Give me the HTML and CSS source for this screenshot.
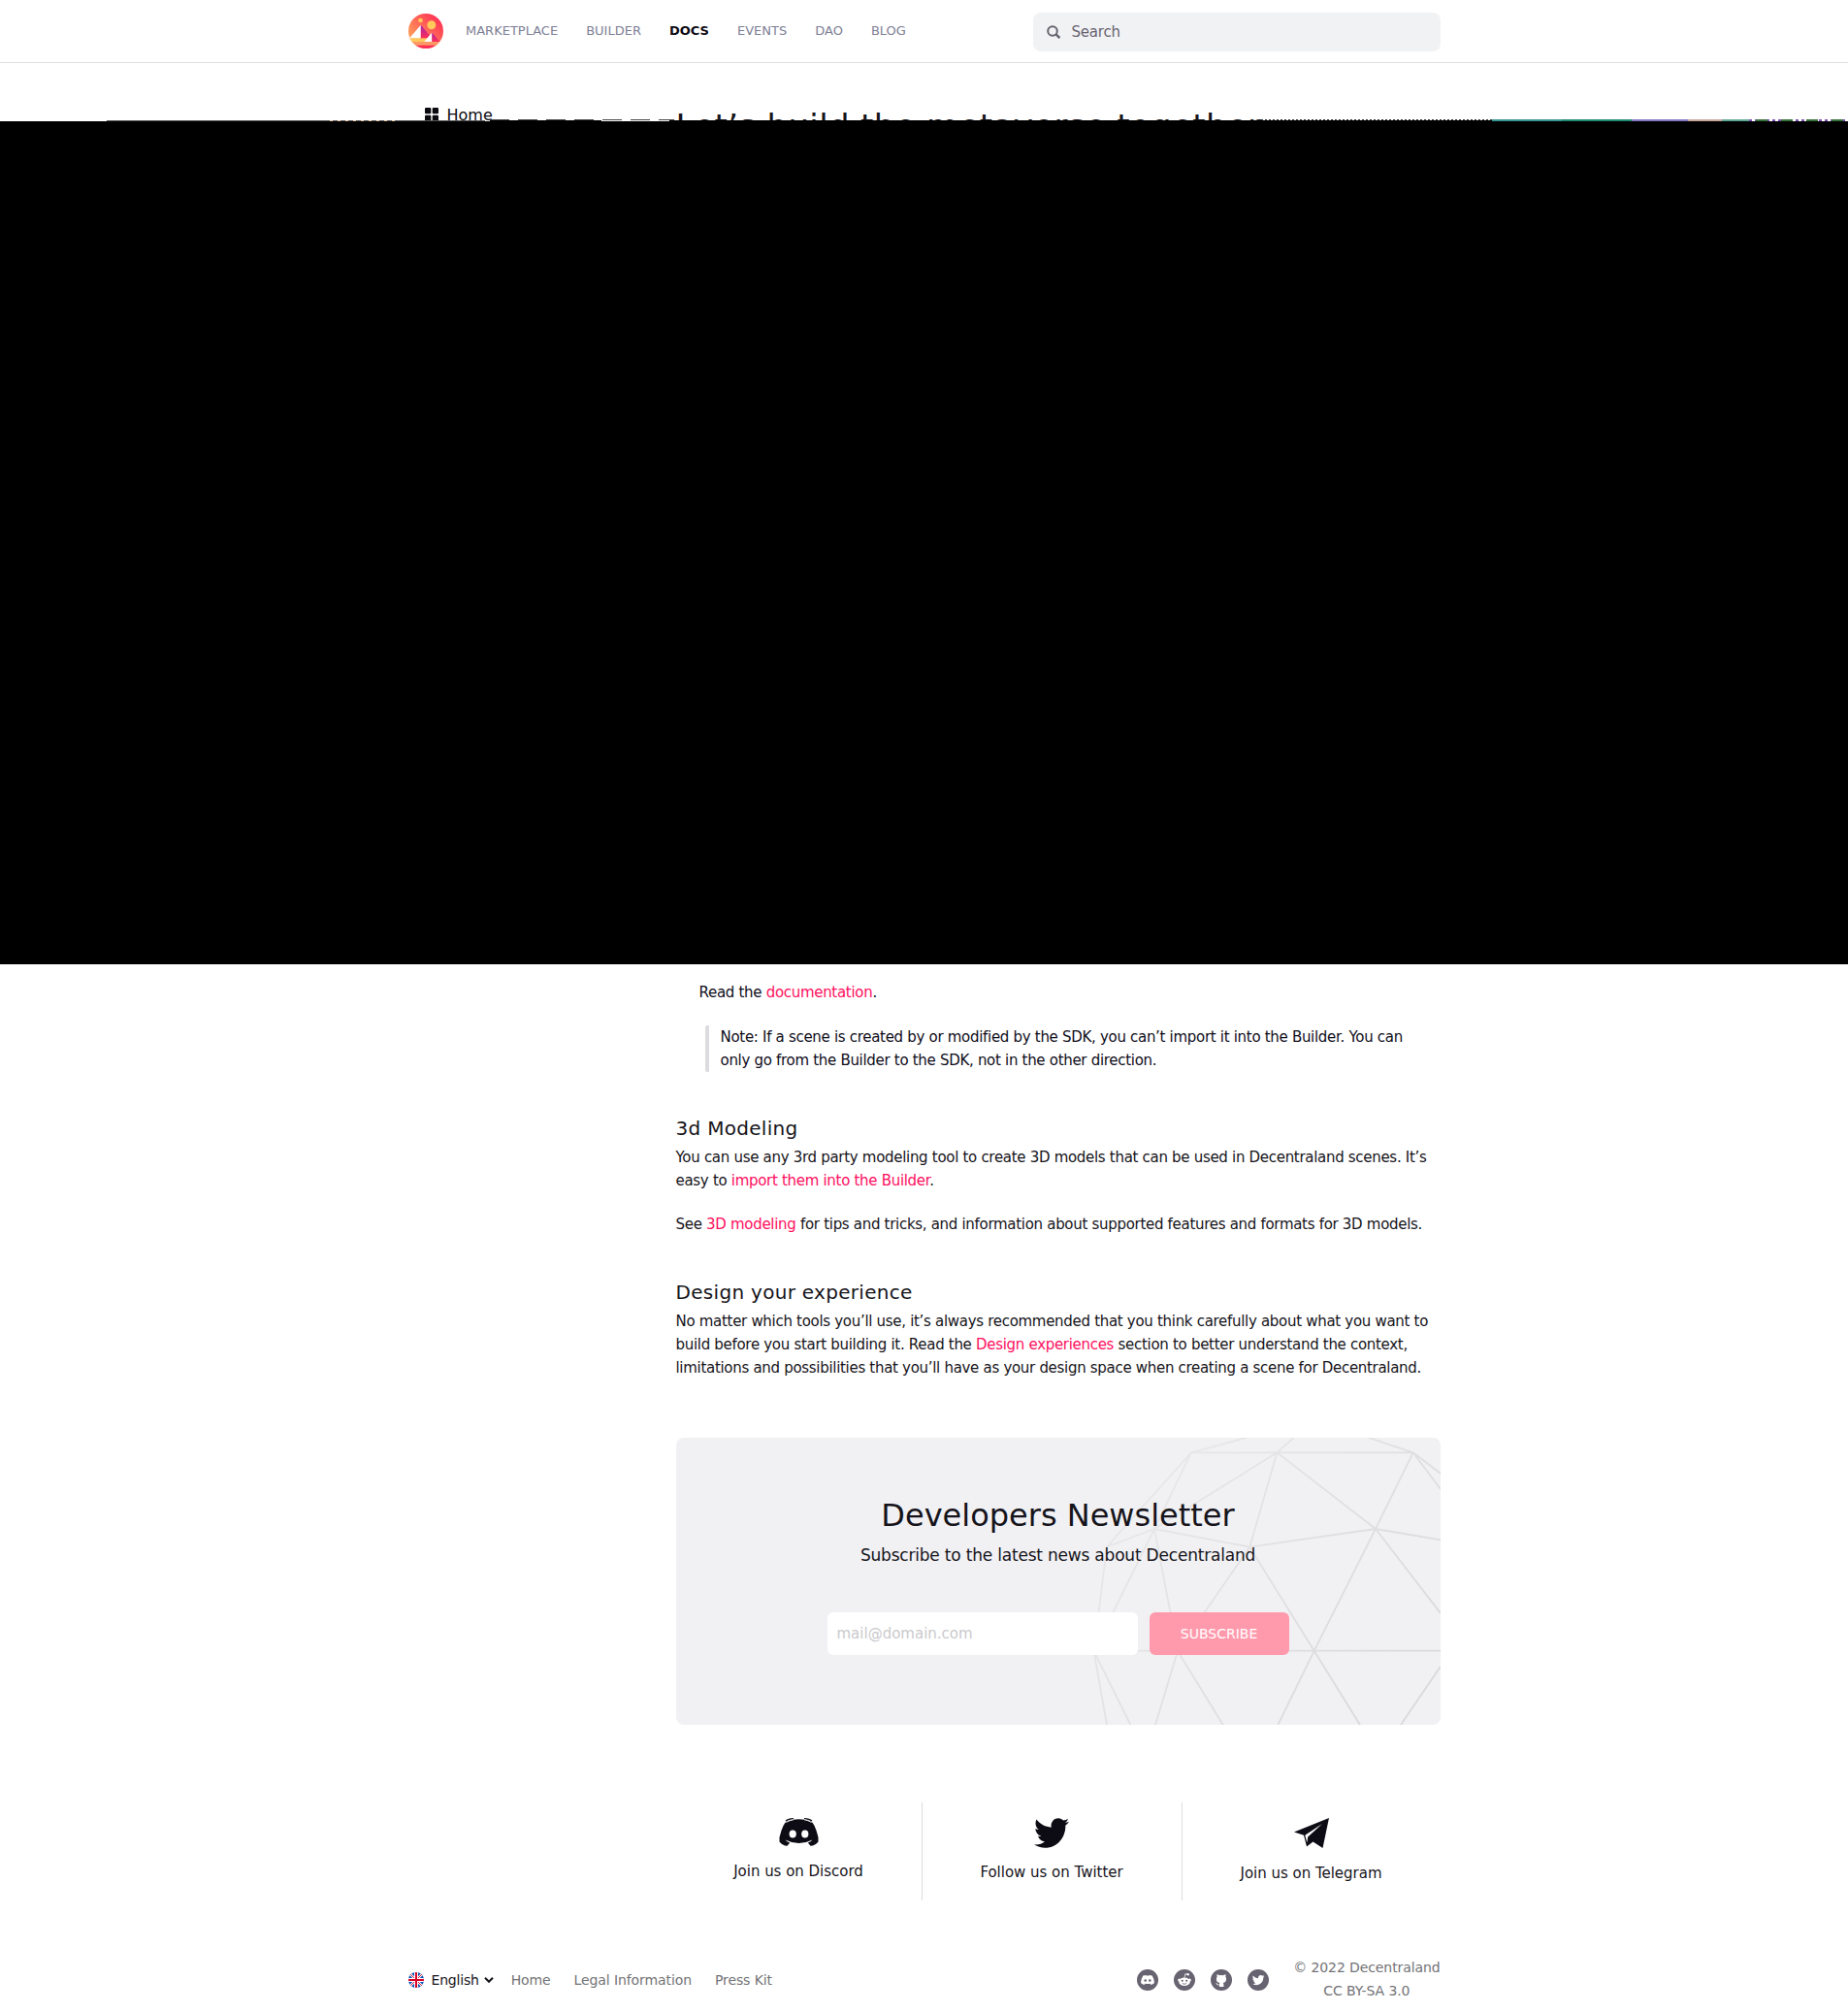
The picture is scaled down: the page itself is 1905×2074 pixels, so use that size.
FILE: index.html
```html
<!DOCTYPE html>
<html lang="en">
<head>
<meta charset="utf-8">
<title>Decentraland Documentation</title>
<link rel="stylesheet" href="styles.css">
</head>
<body>
<svg class="defs" width="0" height="0">
  <defs>
    <symbol id="twitter" viewBox="0 0 512 512"><path d="M459.37 151.716c.325 4.548.325 9.097.325 13.645 0 138.72-105.583 298.558-298.558 298.558-59.452 0-114.68-17.219-161.137-47.106 8.447.974 16.568 1.299 25.34 1.299 49.055 0 94.213-16.568 130.274-44.832-46.132-.975-84.792-31.188-98.112-72.772 6.498.974 12.995 1.624 19.818 1.624 9.421 0 18.843-1.3 27.614-3.573-48.081-9.747-84.143-51.98-84.143-102.985v-1.299c13.969 7.797 30.214 12.67 47.431 13.319-28.264-18.843-46.781-51.005-46.781-87.391 0-19.492 5.197-37.36 14.294-52.954 51.655 63.675 129.3 105.258 216.365 109.807-1.624-7.797-2.599-15.918-2.599-24.04 0-57.828 46.782-104.934 104.934-104.934 30.213 0 57.502 12.67 76.67 33.137 23.715-4.548 46.456-13.32 66.599-25.34-7.798 24.366-24.366 44.833-46.132 57.827 21.117-2.273 41.584-8.122 60.426-16.243-14.292 20.791-32.161 39.308-52.628 54.253z"/></symbol>
  </defs>
</svg>

<header class="navbar">
  <div class="navbar-inner">
    <svg class="logo" viewBox="0 0 36 36">
      <defs>
        <linearGradient id="sky" x1="1" y1="0" x2="0" y2="1"><stop offset="0.1" stop-color="#ff2d55"/><stop offset="1" stop-color="#ffbc5b"/></linearGradient>
        <linearGradient id="peak" x1="0" y1="0" x2="0" y2="1"><stop offset="0" stop-color="#a524b3"/><stop offset="1" stop-color="#ff2d55"/></linearGradient>
        <clipPath id="disc"><circle cx="18" cy="18" r="18"/></clipPath>
      </defs>
      <g clip-path="url(#disc)">
        <path fill="url(#sky)" d="M0 0h36v36H0z"/>
        <path fill="#ffc95b" d="M0 25.2h24V29H0z"/>
        <path fill="#fc9965" d="M3 29h31v4H3z"/>
        <path fill="#ff2d55" d="M5 32.8h27V36H5z"/>
        <circle cx="12.5" cy="7" r="2.3" fill="#ffc95b"/>
        <circle cx="23.8" cy="11.8" r="4.5" fill="#ffc95b"/>
        <path fill="#fff" d="M12.8 11.7v13.5H1.2z"/>
        <path fill="url(#peak)" d="M12.8 11.7v13.5h11.5z"/>
        <path fill="#fff" d="M24.3 19.4V29h-8.1z"/>
        <path fill="url(#peak)" d="M24.3 19.4V29h8.2z"/>
      </g>
    </svg>
    <nav class="menu">
      <a>MARKETPLACE</a><a>BUILDER</a><a class="active">DOCS</a><a>EVENTS</a><a>DAO</a><a>BLOG</a>
    </nav>
    <div class="search">
      <svg width="14" height="14" viewBox="0 0 14 14" fill="none" stroke="#676370" stroke-width="2"><circle cx="6" cy="6" r="4.8"/><path d="M9.4 9.2l4 4" stroke-width="2.4"/></svg>
      <span>Search</span>
    </div>
  </div>
</header>

<section class="intro">
  <div class="home">
    <svg width="14" height="14" viewBox="0 0 14 14"><g fill="#0b0a10"><rect width="6.3" height="6.3" rx="1"/><rect x="7.7" width="6.3" height="6.3" rx="1"/><rect y="7.7" width="6.3" height="6.3" rx="1"/><rect x="7.7" y="7.7" width="6.3" height="6.3" rx="1"/></g></svg>
    <span>Home</span>
  </div>
  <h1>Let’s build the metaverse together</h1>
</section>
<div class="band">
  <svg class="fringe" width="1905" height="2" viewBox="0 0 1905 2" fill="none">
    <path stroke="#555" d="M110 1.5h390"/>
    <path stroke="#e8c9a0" stroke-dasharray="3 5" d="M340 1.5h70"/>
    <path stroke="#444" stroke-dasharray="20 9" d="M505 .5h190"/>
    <path stroke="#000" d="M505 1.5h115M690 1.5h610"/>
    <path stroke="#333" stroke-dasharray="2 2" d="M1300 .5h238"/>
    <path stroke="#000" d="M1300 1.5h238"/>
    <path stroke="#369691" stroke-width="2" d="M1538 1h72"/>
    <path stroke="#218a72" stroke-width="2" d="M1610 1h72"/>
    <path stroke="#8478c4" stroke-width="2" d="M1682 1h58"/>
    <path stroke="#c7a79e" stroke-width="2" d="M1740 1h35"/>
    <path stroke="#5fa793" stroke-width="2" d="M1775 1h28"/>
    <path stroke="#7c52b5" stroke-width="2" stroke-dasharray="3 3" d="M1803 1h102"/>
    <path stroke="#39733c" stroke-width="2" stroke-dasharray="12 14" d="M1810 1h95"/>
  </svg>
</div>

<main class="content">
  <div class="nested">
    <p>Read the <a>documentation</a>.</p>
    <blockquote>Note: If a scene is created by or modified by the SDK, you can’t import it into the Builder. You can<br>only go from the Builder to the SDK, not in the other direction.</blockquote>
  </div>
  <h3>3d Modeling</h3>
  <p>You can use any 3rd party modeling tool to create 3D models that can be used in Decentraland scenes. It’s<br>easy to <a>import them into the Builder</a>.</p>
  <p class="spaced">See <a>3D modeling</a> for tips and tricks, and information about supported features and formats for 3D models.</p>
  <h3 class="design">Design your experience</h3>
  <p>No matter which tools you’ll use, it’s always recommended that you think carefully about what you want to<br>build before you start building it. Read the <a>Design experiences</a> section to better understand the context,<br>limitations and possibilities that you’ll have as your design space when creating a scene for Decentraland.</p>

  <section class="newsletter">
    <svg class="globe" width="788" height="296" viewBox="0 0 788 296" fill="none" stroke-width="1.8" stroke-linejoin="round">
      <defs><linearGradient id="mesh" gradientUnits="userSpaceOnUse" x1="430" y1="60" x2="720" y2="296"><stop offset="0" stop-color="#e9e9eb"/><stop offset="1" stop-color="#d9d9dc"/></linearGradient></defs>
      <g stroke="url(#mesh)">
        <path d="M588 0L531 15.300H759.700L713.800 0M636.700 0L619.400 15.300L493 94M759.700 15.300L788 37M759.700 15.300L788 53"/>
        <path d="M444 112.300L531 15.300L493 94L444 112.300L430.600 220M619.400 15.300L591.300 112.700M619.400 15.300L721 94L759.700 15.300"/>
        <path d="M493 94L591.300 112.700L721 94L788 105.300M493 94L430.600 220M493 94L517 220L591.300 112.700L657.700 219.700L721 94L788 181"/>
        <path d="M430.600 219.700H788M444 296L430.600 220L468.400 296M494 296L517 220L563.800 296M620.400 296L657.700 219.700L705 296M747 296L788 235.700"/>
      </g>
    </svg>
    <h2>Developers Newsletter</h2>
    <p class="lead">Subscribe to the latest news about Decentraland</p>
    <div class="form"><div class="email">mail@domain.com</div><div class="subscribe">SUBSCRIBE</div></div>
  </section>

  <section class="community">
    <div class="channel">
      <svg width="41" height="30" viewBox="0 0 41 30"><path fill="#0d0b14" d="M8.500 3.200Q20.500-.8 32.500 3.200Q37 5 40.500 20V24.500Q37.500 28.500 32.500 28.800L29.800 25.500Q33 24.500 34.500 22.400Q20.500 29.500 6.500 22.400Q8 24.500 11.200 25.500L8.500 28.800Q3.500 28.500.5 24.500V20Q4 5 8.500 3.200Z"/><path fill="none" stroke="#0d0b14" stroke-width="1.200" d="M7 3Q9.500 1 15 .6M34 3Q31.500 1 26 .6"/><path fill="none" stroke="#fff" stroke-width=".9" d="M7.500 4.500Q11 2.200 15 1.800M33.500 4.500Q30 2.200 26 1.800"/><ellipse cx="14.200" cy="16.500" rx="3.600" ry="4" fill="#fff"/><ellipse cx="26.800" cy="16.500" rx="3.600" ry="4" fill="#fff"/></svg>
      <span>Join us on Discord</span>
    </div>
    <div class="channel">
      <svg width="36" height="31" viewBox="0 46 512 420" preserveAspectRatio="none" fill="#0d0b14"><use href="#twitter" width="512" height="512"/></svg>
      <span>Follow us on Twitter</span>
    </div>
    <div class="channel">
      <svg width="36" height="32" viewBox="0 0 36 32"><path fill="#0d0b14" d="M36 0L29.500 31L19.500 24.500L13 29.500L10 17.800L0 14.500Z"/><path fill="#fff" d="M29 6L11.300 17.700L13.300 25.500L14.200 19.500Z"/></svg>
      <span>Join us on Telegram</span>
    </div>
  </section>
</main>

<footer class="footer">
  <div class="language">
    <svg width="16" height="16" viewBox="0 0 16 16"><clipPath id="flag"><circle cx="8" cy="8" r="8"/></clipPath><g clip-path="url(#flag)"><path fill="#0b52b5" d="M0 0h16v16H0z"/><path stroke="#fff" stroke-width="2.400" d="M0 0l16 16M16 0L0 16"/><path stroke="#d80027" stroke-width=".9" d="M0 0l16 16M16 0L0 16"/><path stroke="#fff" stroke-width="4" d="M8 0v16M0 8h16"/><path stroke="#d80027" stroke-width="2" d="M8 0v16M0 8h16"/></g></svg>
    <span>English</span>
    <svg class="chevron" width="10" height="6" viewBox="0 0 10 6" fill="none" stroke="#16141a" stroke-width="2"><path d="M1 .8l4 4 4-4"/></svg>
  </div>
  <nav class="links"><a>Home</a><a>Legal Information</a><a>Press Kit</a></nav>
  <div class="social">
    <svg viewBox="0 0 22 22"><circle cx="11" cy="11" r="11" fill="#676370"/><path fill="#fff" d="M6.300 6.500Q8 5.900 9.200 5.900L9.600 6.500H12.400L12.800 5.900Q14 5.900 15.700 6.500Q17.700 9.500 18 14Q16.500 15.800 14.500 15.900L13.700 14.800Q11 15.400 8.300 14.800L7.500 15.900Q5.500 15.800 4 14Q4.300 9.500 6.300 6.500Z"/><circle cx="8.700" cy="11.500" r="1.300" fill="#676370"/><circle cx="13.300" cy="11.500" r="1.300" fill="#676370"/></svg>
    <svg viewBox="0 0 22 22"><circle cx="11" cy="11" r="11" fill="#676370"/><g fill="#fff"><ellipse cx="11" cy="12.700" rx="5.800" ry="4.300"/><circle cx="5.700" cy="10.900" r="1.500"/><circle cx="16.300" cy="10.900" r="1.500"/><circle cx="14.600" cy="5.300" r="1.200"/></g><path d="M11 8.500L11.800 4.700L14.500 5.300" fill="none" stroke="#fff" stroke-width=".8"/><g fill="#676370"><circle cx="8.800" cy="11.800" r="1.050"/><circle cx="13.200" cy="11.800" r="1.050"/></g><path d="M8.800 14.500Q11 16 13.200 14.500" fill="none" stroke="#676370" stroke-width=".8"/></svg>
    <svg viewBox="0 0 22 22"><circle cx="11" cy="11" r="11" fill="#676370"/><path fill="#fff" d="M6.600 5.300Q7.700 5.300 9 6.200Q11 5.700 13 6.200Q14.300 5.300 15.400 5.300Q15.800 6.600 15.400 7.700Q16.300 8.800 16.100 10.500Q15.800 13.500 12.800 14Q13.400 14.600 13.400 15.600V18H8.900V16.300Q6.900 16.600 6.200 15.400Q5.800 14.400 5 14Q6.200 13.700 7 15Q7.700 16 8.900 15.500Q9 14.500 9.400 14Q6.100 13.500 5.900 10.500Q5.800 8.800 6.600 7.700Q6.200 6.600 6.600 5.300Z"/></svg>
    <svg viewBox="0 0 22 22"><circle cx="11" cy="11" r="11" fill="#676370"/><use href="#twitter" x="4.800" y="4.700" width="12.800" height="12.800" fill="#fff"/></svg>
  </div>
  <div class="copyright">© 2022 Decentraland<br>CC BY-SA 3.0</div>
</footer>
</body>
</html>
```
FILE: styles.css
```css
* { box-sizing: border-box; }
body { margin: 0; background: #fff; color: #16141a; font: 15px/24px "DejaVu Sans", sans-serif; }
h1, h2, h3, p, blockquote { margin: 0; font-weight: 400; }
.defs { position: absolute; }
svg { display: block; flex: none; }

.navbar { height: 65px; border-bottom: 1px solid #e0e0e2; }
.navbar-inner { display: flex; align-items: center; width: 1064px; height: 64px; margin: 0 auto; }
.logo { width: 36px; height: 36px; }
.menu { display: flex; gap: 29px; margin-left: 23.5px; font-size: 13px; line-height: 20px; color: #7d8095; padding-bottom: 1px; }
.menu .active { color: #0d0b14; font-weight: 700; }
.search { display: flex; align-items: center; gap: 12px; width: 420px; height: 40px; margin-left: auto; margin-top: 2px; padding-left: 14px; border-radius: 8px; background: #f1f2f4; color: #676370; letter-spacing: -.2px; }

.intro { display: flex; width: 1064px; height: 60px; margin: 0 auto; overflow: hidden; }
.home { display: flex; gap: 9px; width: 276px; padding: 46px 0 0 17px; font-size: 16px; color: #0b0a10; }
.home span { margin-top: -4px; }
h1 { padding-top: 45px; font-size: 34px; line-height: 40px; letter-spacing: .35px; white-space: nowrap; }
.band { position: relative; height: 869px; background: #000; }
.fringe { position: absolute; left: 0; top: -2px; }

.content { width: 788px; margin: 0 0 0 696.5px; padding-top: 17px; white-space: nowrap; letter-spacing: -.3px; }
.content a { color: #ff0f60; }
.nested { padding-left: 24px; color: #0f0d1a; }
blockquote { margin: 22px 0 0 6px; padding-left: 12px; border-left: 4px solid #dcdce0; border-radius: 2px; }
h3 { margin: 46px 0 6px; font-size: 20px; line-height: 24px; letter-spacing: .3px; }
.spaced { margin-top: 21px; }
.design { margin-top: 46px; }

.newsletter { position: relative; height: 296px; margin-top: 60px; padding-top: 61px; border-radius: 8px; overflow: hidden; background: #f1f1f4; text-align: center; }
.newsletter > * { position: relative; }
.newsletter .globe { position: absolute; inset: 0; }
h2 { font-size: 32px; line-height: 38px; letter-spacing: 0; }
.lead { margin-top: 10px; font-size: 17px; letter-spacing: -.2px; }
.form { display: flex; justify-content: center; gap: 12px; margin-top: 47px; line-height: 44px; }
.email { width: 320px; height: 44px; padding-left: 10px; border-radius: 6px; background: #fff; color: #cacacd; text-align: left; font-size: 15px; letter-spacing: 0; }
.subscribe { width: 144px; height: 44px; border-radius: 6px; background: #ff9aad; color: #fff; font-size: 14px; letter-spacing: 0; }

.community { display: grid; grid-template-columns: 254px 268px 1fr; height: 101px; margin-top: 80px; letter-spacing: -.02px; }
.channel { display: flex; flex-direction: column; align-items: center; gap: 13px; padding-top: 16px; border-right: 1px solid #dcdce0; }
.channel:last-child { border: 0; }

.footer { display: flex; align-items: center; width: 1064px; height: 48px; margin: 57px auto 0; padding-top: 1px; font-size: 14px; color: #737376; letter-spacing: -.1px; }
.language { display: flex; align-items: center; color: #16141a; letter-spacing: -.2px; }
.language span { margin-left: 8px; }
.chevron { margin-left: 5px; }
.links { display: flex; gap: 24px; margin-left: 18px; }
.social { display: flex; gap: 16px; margin-left: auto; }
.social svg { width: 22px; height: 22px; }
.copyright { margin: -1px 0 0 25px; text-align: center; }
```
